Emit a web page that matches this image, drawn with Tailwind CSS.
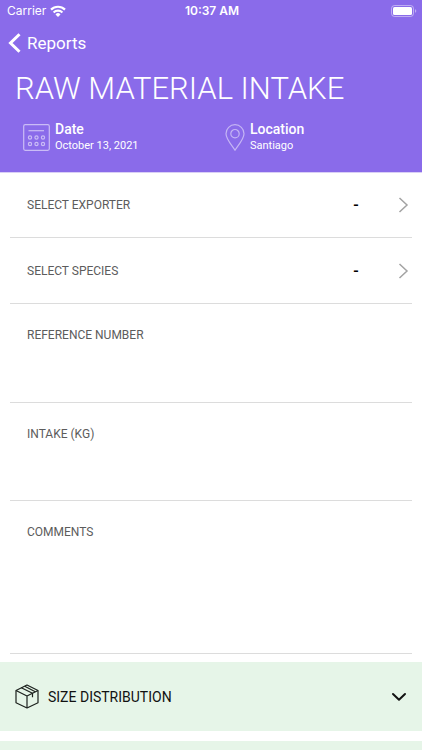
<!DOCTYPE html>
<html lang="en">
<head>
<meta charset="utf-8">
<meta name="viewport" content="width=device-width, initial-scale=1">
<title>Raw Material Intake</title>
<script src="https://cdn.jsdelivr.net/npm/@tailwindcss/browser@4"></script>
</head>
<body class="flex h-screen flex-col overflow-hidden bg-white font-['Roboto',sans-serif]">
<header class="shrink-0 border-b border-[#d9cff6] bg-[#8a6bea] pb-[18px] text-white">
  <div class="grid h-[22px] grid-cols-3 items-center pr-[5px] pl-[7px] font-['Inter',sans-serif] text-[12px] leading-4">
    <div class="flex items-center gap-1">
      <span>Carrier</span>
      <svg class="h-[12px] w-[16px]" viewBox="0 0 16 12" fill="none" stroke="currentColor" stroke-width="2.200" aria-hidden="true">
        <path d="M1 4.600a10 10 0 0 1 14 0"/>
        <path d="M3.600 7.500a6.300 6.300 0 0 1 8.800 0"/>
        <path d="M8 12 5.500 9.400a3.500 3.500 0 0 1 5 0Z" fill="currentColor" stroke="none"/>
      </svg>
    </div>
    <span class="text-center font-semibold">10:37 AM</span>
    <svg class="h-[12px] w-[26px] justify-self-end" viewBox="0 0 26 12" aria-hidden="true">
      <rect x=".5" y=".5" width="22" height="11" rx="3" fill="none" stroke="#fff" stroke-opacity=".45"/>
      <rect x="2" y="2" width="19" height="8" rx="1.500" fill="#fff"/>
      <path d="M24 4.200v3.600c.8-.3 1.300-1 1.300-1.800S24.800 4.500 24 4.200Z" fill="#fff" fill-opacity=".45"/>
    </svg>
  </div>
  <nav class="flex h-[42px] items-center pl-[8px]">
    <a href="#" class="flex items-center gap-[6px] text-[17px] leading-6">
      <svg class="h-[20px] w-[13px]" viewBox="0 0 13 20" fill="none" stroke="currentColor" stroke-width="3" aria-hidden="true"><path d="M11.500 1.200 2.500 10l9 8.800"/></svg>
      Reports
    </a>
  </nav>
  <h1 class="pt-[5px] pl-[15px] text-[31px] leading-[40px] font-light">RAW MATERIAL INTAKE</h1>
  <dl class="grid grid-cols-2 gap-x-[28px] px-[23px] pt-[11px]">
    <div class="flex items-center gap-[5px]">
      <svg class="h-[27px] w-[27px] shrink-0" viewBox="0 0 27 27" fill="none" stroke="#fff" stroke-opacity=".55" stroke-width="1.200" aria-hidden="true">
        <rect x=".7" y=".7" width="25.600" height="25.600" rx="1.500"/>
        <path d="M5.500 6.700h15.500"/>
        <circle cx="7" cy="13.500" r="1.600"/><circle cx="13.500" cy="13.500" r="1.600"/><circle cx="20" cy="13.500" r="1.600"/>
        <circle cx="7" cy="20" r="1.600"/><circle cx="13.500" cy="20" r="1.600"/><circle cx="20" cy="20" r="1.600"/>
      </svg>
      <div>
        <dt class="text-[14px] leading-[18px] font-medium">Date</dt>
        <dd class="text-[11px] leading-4">October 13, 2021</dd>
      </div>
    </div>
    <div class="flex items-center gap-[5px]">
      <svg class="h-[27px] w-[20px] shrink-0" viewBox="0 0 20 27" fill="none" stroke="#fff" stroke-opacity=".5" stroke-width="1.200" aria-hidden="true">
        <path d="M10 26.200C7 21.500 1 15 1 9.700a9 9 0 0 1 18 0c0 5.300-6 11.800-9 16.500Z"/>
        <circle cx="10" cy="9.700" r="4.200"/>
      </svg>
      <div>
        <dt class="text-[14px] leading-[18px] font-medium">Location</dt>
        <dd class="text-[11px] leading-4">Santiago</dd>
      </div>
    </div>
  </dl>
</header>

<main class="shrink-0">
  <form class="px-[10px] text-[12px] leading-4 text-[#5c5c5c]">
    <div class="flex h-[65px] items-center border-b border-[#dcdcdc] pr-[3px] pl-[17px]">
      <label for="exporter" class="flex-1">SELECT EXPORTER</label>
      <select id="exporter" class="w-[48px] appearance-none bg-transparent text-center text-[16px] leading-6 font-medium text-black"><option>-</option></select>
      <svg class="ml-[18px] h-[16px] w-[11px]" viewBox="0 0 11 16" fill="none" stroke="#a3a3a3" stroke-width="1.500" aria-hidden="true"><path d="m1.500 1 7.500 7-7.500 7"/></svg>
    </div>
    <div class="flex h-[66px] items-center border-b border-[#dcdcdc] pr-[3px] pl-[17px]">
      <label for="species" class="flex-1">SELECT SPECIES</label>
      <select id="species" class="w-[48px] appearance-none bg-transparent text-center text-[16px] leading-6 font-medium text-black"><option>-</option></select>
      <svg class="ml-[18px] h-[16px] w-[11px]" viewBox="0 0 11 16" fill="none" stroke="#a3a3a3" stroke-width="1.500" aria-hidden="true"><path d="m1.500 1 7.500 7-7.500 7"/></svg>
    </div>
    <div class="flex h-[99px] flex-col border-b border-[#dcdcdc] px-[17px] pt-[23px] pb-2">
      <label for="reference">REFERENCE NUMBER</label>
      <input id="reference" type="text" class="min-h-0 flex-1 text-[16px] text-black outline-none">
    </div>
    <div class="flex h-[98px] flex-col border-b border-[#dcdcdc] px-[17px] pt-[23px] pb-2">
      <label for="intake">INTAKE (KG)</label>
      <input id="intake" type="text" inputmode="decimal" class="min-h-0 flex-1 text-[16px] text-black outline-none">
    </div>
    <div class="flex h-[153px] flex-col border-b border-[#dcdcdc] px-[17px] pt-[23px] pb-2">
      <label for="comments">COMMENTS</label>
      <textarea id="comments" class="min-h-0 flex-1 resize-none text-[16px] text-black outline-none"></textarea>
    </div>
  </form>
  <div class="flex flex-col gap-[10px] pt-[8px]">
    <button type="button" aria-expanded="false" class="flex h-[69px] items-center bg-[#e6f5e8] px-[15px] text-left text-[14px] leading-5 text-[#111]">
      <svg class="h-[25px] w-[24px]" viewBox="0 0 24 25" fill="none" stroke="#1c211d" stroke-width="1.200" stroke-linejoin="round" aria-hidden="true">
        <path d="M12 1 23 6.500v12.300L12 24 1 18.800V6.500Z"/>
        <path d="M1 6.500 12 12 23 6.500M12 12V24"/>
        <path d="M6.300 3.800 17.500 9.200v4M9.700 2.200 20.300 7.700"/>
      </svg>
      <span class="ml-[9px] flex-1">SIZE DISTRIBUTION</span>
      <svg class="h-[10px] w-[16px]" viewBox="0 0 16 10" fill="none" stroke="#111" stroke-width="2" stroke-linecap="round" stroke-linejoin="round" aria-hidden="true"><path d="M2 2l6 5.700L14 2"/></svg>
    </button>
    <div class="h-[69px] bg-[#e6f5e8]"></div>
  </div>
</main>
</body>
</html>
